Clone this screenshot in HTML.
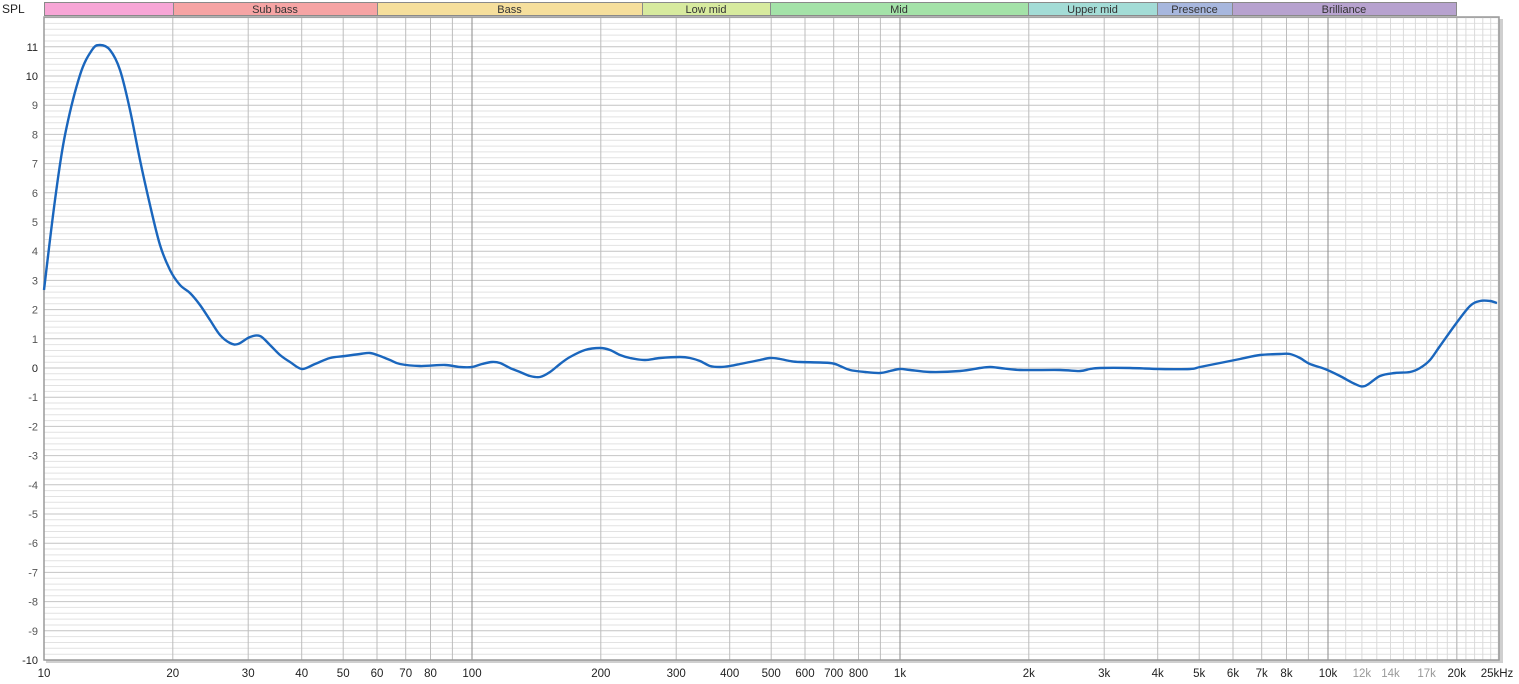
<!DOCTYPE html>
<html><head><meta charset="utf-8"><style>
html,body{margin:0;padding:0;background:#fff;width:1519px;height:684px;overflow:hidden}
svg{display:block;font-family:"Liberation Sans",sans-serif}
</style></head><body>
<svg id="s" width="1519" height="684" xmlns="http://www.w3.org/2000/svg"></svg>
<script>
const s=document.getElementById('s');let h='';
const X0=44,X1=1499,D=428,Y0=368,PD=29.2,YT=17,YB=660;
const fx=f=>X0+Math.log10(f/10)*D, dy=v=>Y0-v*PD;
// frame shadow
h+=`<rect x="${X0+2}" y="${YT+2}" width="${X1-X0+2}" height="${YB-YT+1}" fill="#cfcfcf"/>`;
h+=`<rect x="${X0}" y="${YT}" width="${X1-X0}" height="${YB-YT}" fill="#fff"/>`;
// horizontal minor
for(let i=-50;i<=60;i++){const y=dy(i*0.2);if(y<YT||y>YB)continue;const maj=i%5==0;
h+=`<line x1="${X0}" x2="${X1}" y1="${y.toFixed(1)}" y2="${y.toFixed(1)}" stroke="${maj?'#c4c4c4':'#e2e2e2'}" stroke-width="1"/>`;}
// vertical
let fs=[];
for(let d=10;d<=10000;d*=10)for(let n=1;n<=9;n++)fs.push(d*n);
for(let k=11;k<=25;k++)fs.push(k*1000);
fs.forEach(f=>{const x=fx(f);if(x>X1)return;const dec=(f==100||f==1000||f==10000);
h+=`<line x1="${x.toFixed(1)}" x2="${x.toFixed(1)}" y1="${YT}" y2="${YB}" stroke="${dec?'#8a8a8a':(f>10000&&f!=20000?'#dadada':'#bdbdbd')}" stroke-width="1"/>`;});
h+=`<rect x="${X0}" y="${YT}" width="${X1-X0}" height="${YB-YT}" fill="none" stroke="#9a9a9a" stroke-width="1.5"/>`;
// bands
const b=[[44,173,'#f7a6d6',''],[173,377,'#f6a4a4','Sub bass'],[377,642,'#f6df9c','Bass'],[642,770,'#d7ea9e','Low mid'],[770,1028,'#a4e2a8','Mid'],[1028,1157,'#a3dcd6','Upper mid'],[1157,1232,'#a7b7de','Presence'],[1232,1456,'#b7a2cf','Brilliance']];
b.forEach(([a,c,col,t])=>{h+=`<rect x="${a+0.5}" y="2.5" width="${c-a}" height="13" fill="${col}" stroke="#8a8a8a"/>`;
if(t)h+=`<text x="${(a+c)/2}" y="13" font-size="11" text-anchor="middle" fill="#333">${t}</text>`;});
h+=`<text x="2" y="13" font-size="12" fill="#222">SPL</text>`;
// y labels
for(let v=-10;v<=11;v++)h+=`<text x="38" y="${(dy(v)+4).toFixed(1)}" font-size="11" text-anchor="end" fill="${v>=10||v==0||v==-10?'#222':'#555'}">${v}</text>`;
// x labels
const xl=[[10,'10'],[20,'20'],[30,'30'],[40,'40'],[50,'50'],[60,'60'],[70,'70'],[80,'80'],[100,'100'],[200,'200'],[300,'300'],[400,'400'],[500,'500'],[600,'600'],[700,'700'],[800,'800'],[1000,'1k'],[2000,'2k'],[3000,'3k'],[4000,'4k'],[5000,'5k'],[6000,'6k'],[7000,'7k'],[8000,'8k'],[10000,'10k'],[12000,'12k'],[14000,'14k'],[17000,'17k'],[20000,'20k']];
xl.forEach(([f,t])=>{const g=(f==12000||f==14000||f==17000);h+=`<text x="${fx(f).toFixed(1)}" y="677" font-size="11.5" text-anchor="middle" fill="${g?'#999':'#222'}">${t}</text>`;});
h+=`<text x="1497" y="677" font-size="11.5" text-anchor="middle" fill="#222">25kHz</text>`;
// curve
const p=[[44,290],[55,200],[65,135],[80,75],[92,50],[100,45],[110,50],[120,70],[130,110],[140,160],[150,205],[160,245],[170,270],[180,285],[190,293],[200,305],[210,320],[220,335],[230,343],[238,344],[250,337],[260,336],[270,345],[280,355],[290,362],[302,369],[315,364],[330,358],[345,356],[360,354],[370,353],[380,356],[390,360],[400,364],[420,366],[445,365],[460,367],[472,367],[482,364],[492,362],[500,363],[510,368],[520,372],[530,376],[540,377],[550,372],[560,364],[570,357],[585,350],[600,348],[610,350],[620,355],[630,358],[645,360],[660,358],[680,357],[690,358],[700,361],[710,366],[720,367],[730,366],[740,364],[750,362],[760,360],[770,358],[780,359],[790,361],[800,362],[830,363],[840,366],[850,370],[865,372],[880,373],[890,371],[900,369],[910,370],[930,372],[960,371],[980,368],[990,367],[1000,368],[1020,370],[1060,370],[1080,371],[1090,369],[1100,368],[1130,368],[1160,369],[1190,369],[1200,367],[1220,363],[1240,359],[1260,355],[1280,354],[1290,354],[1300,358],[1310,364],[1325,369],[1340,376],[1355,384],[1365,386],[1380,376],[1395,373],[1410,372],[1420,368],[1430,360],[1440,346],[1455,325],[1470,306],[1480,301],[1490,301],[1497,303]];
let d=`M${p[0][0]},${p[0][1]}`;
for(let i=0;i<p.length-1;i++){const a=p[Math.max(0,i-1)],b0=p[i],c=p[i+1],e=p[Math.min(p.length-1,i+2)];
d+=` C${(b0[0]+(c[0]-a[0])/6).toFixed(1)},${(b0[1]+(c[1]-a[1])/6).toFixed(1)} ${(c[0]-(e[0]-b0[0])/6).toFixed(1)},${(c[1]-(e[1]-b0[1])/6).toFixed(1)} ${c[0]},${c[1]}`;}
h+=`<path d="${d}" fill="none" stroke="#1a66bd" stroke-width="2.4" stroke-linejoin="round"/>`;
s.innerHTML=h;
</script>
</body></html>
